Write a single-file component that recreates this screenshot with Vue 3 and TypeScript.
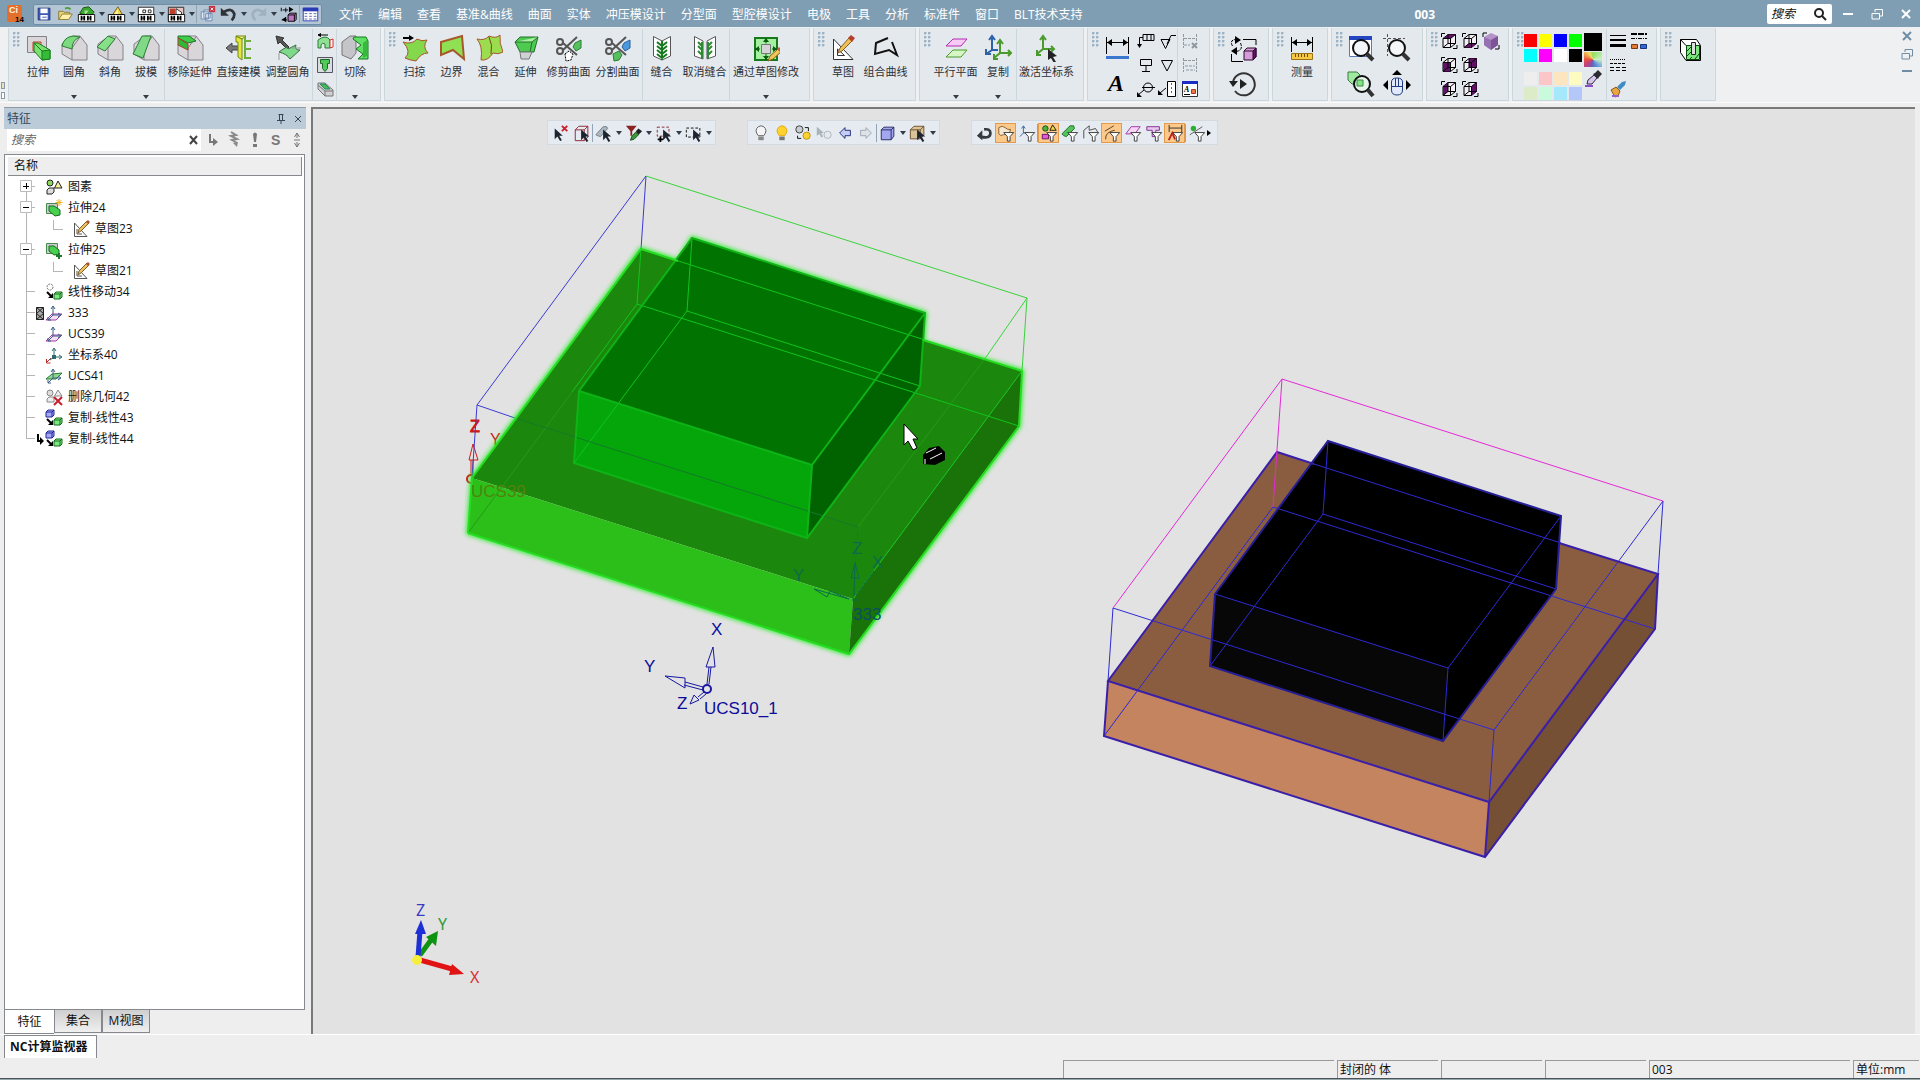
<script setup lang="ts">
import { ref } from 'vue'

interface Tool { icon: string; label: string; menu?: boolean }
interface Section { tools: Tool[]; roomy?: boolean; stack?: string[] }
interface Row { icon: string; label: string; open?: boolean; closed?: boolean; child?: boolean; badge?: string; last?: boolean; first?: boolean }
interface QuickTool { icon: string; label: string; caret?: boolean; on?: boolean; sep?: boolean }

const funnel = '<path fill="#fff" stroke="#333" d="M7.500 9.500h11l-4 4.500v5h-3v-5z"/>'
const pointer = '<path fill="#1c2430" d="M9 6v12l3-3 3 5 2-1-3-5h4z"/>'
const nodes = '<path fill="#fff" stroke="#000" d="M1.500 10.500h18v8h-18z"/><path stroke="#000" stroke-width="2" d="M5 12v5M8 12v5M12 12v5M15 12v5"/><path stroke="#000" d="M5 14.500h3M12 14.500h3"/>'
const grayCube = '<path fill="#d9d6da" stroke="#858087" d="M2 10 13 2h7l7 9v15H12L2 20z"/><path fill="none" stroke="#858087" d="M12 26V14l8-11"/>'
const cubeFrame = '<path fill="none" stroke="#000" d="M1.500 5V1.500H5M17 13v3.500h-4"/><path fill="#f3eef5" stroke="#000" d="M3 6.500 8 2.500h7.500v9l-5 4H3z"/>'
const cubeEdges = '<path fill="none" stroke="#000" d="M3 6.500h7.500v9M10.500 6.500l5-4M8 2.500v9h7.500M8 11.500l-5 4"/>'
const viewCube = (face: string): string => cubeFrame + `<path fill="#631069" d="${face}"/>` + cubeEdges
const smallBox = (x: number, y: number, fill: string, line: string): string =>
  `<path fill="${fill}" stroke="${line}" d="M${x} ${y + 2}l2-2h6v5l-2 2h-6zM${x} ${y + 2}h6v5M${x + 6} ${y + 2}l2-2"/>`
const axes = '<path fill="none" stroke="#3a5f86" d="M8 3v8l-5 5M8 11h7M6 5l2-3 2 3M13 9l3 2-3 2M3 13v3h3"/>'
const pencil = '<path fill="none" stroke="#555" d="M2.500 3v13.500H15L2.500 3zM5 9v5h5"/><path fill="#f0c060" stroke="#80602a" d="M6 13l1-4 8-8 2 2-8 8z"/><path fill="#b05038" d="M14 2l2-2 2 2-2 2z"/>'
const magnifier = '<circle cx="14" cy="14" r="8" fill="#f4f6f8" stroke="#111" stroke-width="2"/><path stroke="#333" stroke-width="4" d="M20 20l6 6"/>'

const art: Record<string, string> = {
  save: '<path fill="#3f57b5" stroke="#24347c" d="M3.500 3.500h13v13h-13z"/><path fill="#fff" d="M6 4h8v5H6zM6 11h8v5H6z"/><path stroke="#3f57b5" d="M8 13.500h5"/>',
  open: '<path fill="#e8d27a" stroke="#8a7830" d="M3 16V7h5l1 1h6v3"/><path fill="#fff2a8" stroke="#8a7830" d="M3 16l4-6h11l-4 6z"/><path fill="none" stroke="#4a9a3a" stroke-width="2" d="M10 4q4-2 6 1"/>',
  qGreen: '<path fill="#39a82e" stroke="#174d12" d="M3 9l4-6 6-1 6 6-3 3H8z"/><path fill="#a8e090" d="M8 6h5l-4 5z"/>' + nodes,
  qYellow: '<path fill="#f3d54e" stroke="#6e5c10" d="M4 14 12 2l7 12z"/><path fill="#fff3b0" d="M6 13l6-8v8z"/>' + nodes,
  qBox: '<path fill="#fff" stroke="#222" d="M1.500 2.500h17v12h-17zM6.500 5.500h3v3h-3zM12.500 5.500h3v3h-3z"/>' + nodes,
  qRed: '<path fill="#e9c8c0" stroke="#222" d="M1.500 2.500h17v14h-17z"/><path fill="#c04030" d="M3 4h6v7H3z"/><path fill="#fff" stroke="#222" d="M10 4l6 4v8l-6-5z"/>' + nodes,
  copyX: '<path fill="#dfe7f2" stroke="#6a87ad" d="M3.500 7.500h8v8h-8zM6.500 5.500h7v9h-7zM8.500 9.500h7v8h-7z"/><path fill="#c63040" d="M12 1h7v7h-7z"/><path stroke="#fff" d="M14 3l3 3M17 3l-3 3"/>',
  undo: '<path fill="none" stroke="#2e3338" stroke-width="3" d="M5 8q9-6 12 2 0 4-3 7"/><path fill="#2e3338" d="M2 3v9h9z"/>',
  redo: '<path fill="none" stroke="#9fb0be" stroke-width="3" d="M16 8Q7 2 4 10q0 4 3 7"/><path fill="#9fb0be" d="M19 3v9h-9z"/>',
  swap: '<path fill="none" stroke="#000" d="M4 5.500h6M7.500 3v5M3 16.500h6M2.500 3v4"/><path fill="#000" d="M11 2l5 3-5 3zM8 13v6l-5-3z"/><path fill="#b877c0" stroke="#000" d="M10 11l2-2h7v7l-2 2h-7zM10 11h7v7M17 11l2-2"/>',
  table: '<path fill="#fff" stroke="#2a3bb5" d="M2.500 3.500h16v14h-16z"/><path fill="#2a3bb5" d="M2 3h17v4H2z"/><path stroke="#4b62a8" stroke-dasharray="3 2" d="M4 9.500h13M4 12.500h13M4 15.500h13"/>',

  extrude: '<path fill="#d9d6da" stroke="#858087" d="M3.500 2.500h19v16h-19z"/><path fill="#efb8a0" stroke="#c23c26" d="M9 8h8v9H9z"/><path fill="#79e070" stroke="#1b7a1b" d="M10 9h4l12 7v9l-8 1-8-9z"/><path fill="#35bb3a" stroke="#1b7a1b" d="M18 17l8-1v9l-8 1z"/><path fill="none" stroke="#1b7a1b" d="M10 9l8 8"/>',
  fillet: grayCube + '<path fill="#7bd97e" stroke="#2c7d35" d="M2 12Q4 3 13 2l7 1q-8 3-8 12z"/>',
  chamfer: grayCube + '<path fill="#86e088" stroke="#2c7d35" d="M1 13 12 2l7 3L9 17z"/>',
  draft: grayCube + '<path fill="#7fd987" stroke="#2c7d35" d="M10 2h9l-8 22-10-4z"/>',
  removeExtend: grayCube + '<path fill="#3fcc48" stroke="#1d7426" d="M2 2h11l7 5-8 2-10-5z"/><path fill="#2eb838" stroke="#b03a28" d="M2 4l10 6v6L2 11z"/>',
  direct: '<path fill="#777" stroke="#444" d="M1 14l6-5v3h7v4H7v3z"/><path fill="#e4e83a" stroke="#6f8a12" d="M11 2l6 3v21l-4-3V8h-2z"/><path fill="#f4f070" stroke="#6f8a12" d="M11 2h10l-4 3z"/><path fill="none" stroke="#6fae3a" stroke-width="2" d="M20 3v22M20 7h6M20 15h6M20 24h6"/>',
  adjust: '<path fill="#555" stroke="#333" d="M2 2l8 2-2 2 7 7-2 2-7-7-2 2z"/><path fill="#7fd98a" stroke="#3a6a44" d="M5 18q9-7 9-3l8-4q-2 5 4 5l-10 9q-3-5-11-7z"/><path fill="none" stroke="#999" d="M17 14h10M5 19v7"/>',
  shell: '<path fill="#8ee094" stroke="#2b7d35" d="M2 8q8-6 12 0v8H9v-4q-3-2-4 1v3H2z"/><path fill="#fff" stroke="#c33" d="M14 8l3-1v8l-3 1z"/><path stroke="#000" d="M3 3h9M5 1.500 2 3l3 1.500"/>',
  boss: '<path fill="#d9dde0" stroke="#556" d="M1.500 1.500h15v15h-15z"/><path fill="#4fc95a" stroke="#1b6b27" d="M4.500 3.500h9v4h-2v5l-2.500 3-2.500-3v-5h-2z"/>',
  pocket: '<path fill="#d0d0d2" stroke="#777" d="M2 3h7l8 7v6H9L2 9z"/><path fill="#49bd52" stroke="#286" d="M4 4h5l5 5H9z"/><path fill="none" stroke="#777" d="M2 5l7 6v5M9 11h8"/>',
  cut: '<path fill="#c5c5c9" stroke="#777" d="M1 8l8-6h6v17l-5 6-9-4z"/><path fill="#5fe065" stroke="#19781f" d="M13 3h12l2 4v18H17l5-5-7-5 5-4-8-6z"/><path fill="#38b93e" d="M22 9l4-3v16l-4 2z"/>',
  sweep: '<path fill="#83d84c" stroke="#a8562c" d="M2 8q9 3 14-3 5 3 10 1-5 7 1 13-7 0-12 8-7-1-11-3 7-6-2-16z"/><path stroke="#000" stroke-width="2" d="M2 4h7"/><path fill="#000" d="M8 1l5 3-5 3z"/>',
  boundary: '<path fill="#8fe052" stroke="#a8562c" stroke-width="2" d="M3 8l21-6 2 23-11-9-12 5z"/>',
  blend: '<path fill="#9bdd4e" stroke="#a8562c" d="M2 5q8 2 12-3 7 3 11-1-1 8 3 17-5 3-10 1-5 8-12 7 2-14-4-21z"/><path fill="none" stroke="#6c4a1c" d="M14 3q4 8 2 17"/>',
  extend: '<path fill="#4fca50" stroke="#23702a" d="M3 8l5-5h18l-4 15H8z"/><path fill="#a9f0a0" stroke="#23702a" d="M3 8h17l6-5M20 8l-2 10"/><path fill="#cfd2d4" stroke="#777" d="M8 18h12l-3 7H9z"/>',
  trim: '<g fill="none" stroke="#555" stroke-width="2"><circle cx="5" cy="8" r="3"/><circle cx="5" cy="17" r="3"/><path d="M8 9l14 12M8 16 22 3"/></g><path fill="#56c15c" stroke="#2b7d35" d="M20 9l6-3v8l-5 3-3-4z"/><path fill="#fff" stroke="#000" stroke-dasharray="2 1" d="M10 20l4-3 4 3-2 6-5 1z"/>',
  split: '<g fill="none" stroke="#555" stroke-width="2"><circle cx="5" cy="8" r="3"/><circle cx="5" cy="17" r="3"/><path d="M8 9l14 12M8 16 22 3"/></g><path fill="#4c98dd" stroke="#2a5f9a" d="M20 9l6-3v8l-5 3-3-4z"/><path fill="#56c15c" stroke="#2b7d35" d="M9 20l6-3 3 4-3 5-5 1z"/>',
  sew: '<path fill="#fff" stroke="#555" d="M5.500 2.500 14 7l8.500-4.500V22L14 26l-8.500-4z"/><path fill="none" stroke="#157a1c" stroke-width="2" d="M14 7v19M9 8l5 4 5-4M9 12l5 4 5-4M9 16l5 4 5-4M9 20l5 4 5-4"/>',
  unsew: '<path fill="#fff" stroke="#555" d="M3.500 2.500 12 7v18l-8.500-3zM24.500 2.500 16 7v18l8.500-3z"/><path fill="none" stroke="#2c8a33" stroke-width="2" d="M11 8v16M17 8v16M7 8l4 4M7 12l4 4M7 17l4 4M21 8l-4 4M21 12l-4 4M21 17l-4 4"/>',
  bySketch: '<path fill="#a4efa0" stroke="#167a1a" stroke-width="2" d="M3 4h22v22H3z"/><path fill="#d5d5d8" stroke="#777" d="M9.500 10.500h9v9h-9z"/><path stroke="#0a5a10" d="M14 4.500v5M14 20v6M3 15h5M20 15h5"/><path fill="#0a5a10" d="M11 8h6l-3-4zM11 22h6l-3 4zM7 12v6l-4-3zM21 12v6l4-3z"/><path fill="#f3c558" stroke="#856020" d="M16 27l2-5 8-7 3 3-8 7z"/><path fill="#c65a40" d="M25 15l2-2 3 3-2 2z"/>',
  sketch: '<path fill="#fff" stroke="#333" d="M4.500 5v20.500H24zM8.500 15v6.500h7z"/><path fill="#f0bf58" stroke="#85602a" d="M9 19l2-5 9-10 3 3-10 10z"/><path fill="#b5402c" d="M19 4l3-3 4 3-3 4z"/>',
  composite: '<path fill="none" stroke="#111" stroke-width="2" d="M16 4 4 9l-1 11 14-4 8 5-5-13"/>',
  planes: '<path fill="#f7c9f5" stroke="#b32cb0" d="M4 12l7-7h14l-6 7z"/><path fill="#d5f7c5" stroke="#4f9a2a" d="M4 23l7-7h14l-6 7z"/>',
  copyUcs: '<g fill="none" stroke="#2b62a8" stroke-width="2"><path d="M8 4v12l-6 4M8 16h6M5 6l3-4 3 4M2 15v5h5"/></g><g fill="none" stroke="#4b9a2c" stroke-width="2"><path d="M16 8v11l-6 5M16 19h10M13 10l3-4 3 4M24 16l3 3-3 3M10 20v5h4"/></g>',
  activate: '<g fill="none" stroke="#4b9a2c" stroke-width="2"><path d="M10 4v11l-6 5M10 15h10M7 6l3-4 3 4M18 12l3 3-3 3M4 16v5h4"/></g><path fill="#222" d="M15 15v11l3-2 3 5 2-1-3-5 4-1z"/>',
  dimension: '<path fill="none" stroke="#000" stroke-width="1" d="M3.500 3v17M25.500 3v17M4 8.500h21"/><path fill="#000" d="M4 8.500 9 5v7zM25 8.500 20 5v7z"/><path fill="#3a78cf" d="M3 22h23v3H3z"/>',
  textTool: '<text x="5" y="21" font-family="Liberation Serif" font-size="24" font-style="italic" font-weight="bold" fill="#000">A</text>',
  note: '<path fill="none" stroke="#000" d="M6 2.500h11v6H6zM10 3v5M14 3v5M6 5.500H2.500V15"/><path fill="#000" d="M0 12h5l-2.500 4z"/>',
  rough: '<path fill="none" stroke="#000" d="M3 7.500h9l-4.500 9zM9 12l4-8.500h5"/>',
  datum: '<path fill="none" stroke="#000" d="M3.500 3.500h11v6h-11zM9 10v6M5 15.500h8"/>',
  triangle: '<path fill="none" stroke="#000" d="M3.500 4.500h11L9 15z"/>',
  balloon: '<circle cx="11" cy="7.500" r="4.500" fill="none" stroke="#000"/><path fill="none" stroke="#000" d="M5 7.500h13M7 10l-6 5"/><path fill="#000" d="M0 12v5h5z"/>',
  listNote: '<path fill="#fff" stroke="#000" d="M9.500 1.500h8v15h-8z"/><path stroke="#000" d="M8 8l-6 5"/><path fill="#000" d="M0 10v5h5z"/><path stroke="#c33" stroke-dasharray="2 2" d="M13.500 3v12"/>',
  dimDel: '<path fill="none" stroke="#8f979f" stroke-dasharray="3 1" d="M2.500 2v14M15.500 2v8M3 6.500h12M3 13h6"/><path stroke="#8f979f" stroke-width="2" d="M11 11l5 5M16 11l-5 5"/>',
  dimSwap: '<path fill="none" stroke="#8f979f" stroke-dasharray="3 1" d="M2.500 2v14M15.500 2v14M3 4.500h12M4 10h10M5 14h9"/>',
  style: '<path fill="#fff" stroke="#333" d="M1.500 2.500h15v14h-15z"/><path fill="#1a2cc4" d="M1 1h16v3H1z"/><text x="3" y="12" font-family="Liberation Serif" font-size="8" font-style="italic" font-weight="bold">A</text><path stroke="#000" d="M3 14.500h6"/><path fill="#e77b3c" stroke="#a33" d="M10.500 9.500h4v4h-4z"/>',
  replace: '<path fill="none" stroke="#000" d="M14 5.500h13V11M2.500 20v7.500H14"/><path fill="none" stroke="#000" stroke-dasharray="3 1" d="M3.500 12Q0 6 7 5.500M11.500 9q3 7-4 8.500"/><path fill="#000" d="M6 2l6 4-6 4zM8 13l-6 4 6 4z"/><path fill="#d59ad8" stroke="#2a0a2c" d="M15 17l3-3h9v9l-3 3h-9z"/><path fill="#631069" stroke="#2a0a2c" d="M24 17l3-3v9l-3 3z"/><path stroke="#2a0a2c" d="M15 17h9"/>',
  history: '<path fill="none" stroke="#333" stroke-width="2" d="M4 12a11 11 0 1 1 2 9"/><path fill="#222" d="M0 11h9l-5 6zM11 9l7 5-7 5z"/>',
  measure: '<path fill="none" stroke="#000" d="M3.500 3v15M24.500 3v15M4 8.500h20"/><path fill="#000" d="M4 8.500 9 5v7zM24 8.500 19 5v7z"/><path fill="#f6c844" stroke="#9a7414" d="M3.500 19.500h21v6h-21z"/><path stroke="#6a4f08" d="M7.500 20v3M10.500 20v3M13.500 20v3M16.500 20v3M19.500 20v3"/>',
  zoomFit: '<path fill="#fff" stroke="#5a7ab5" d="M2.500 3.500h22v19h-22z"/><path fill="#2446c0" d="M2 2h23v4H2z"/>' + magnifier,
  zoomWin: '<path fill="none" stroke="#555" stroke-dasharray="3 2" d="M4.500 0v22M0 4.500h22"/>' + magnifier,
  zoomObj: '<path fill="#9fe8a0" stroke="#3a7a40" d="M1 2h9l3 3v9H5L1 10z"/><circle cx="15" cy="14" r="8" fill="#e9f5ea" stroke="#111" stroke-width="2"/><path fill="#86e488" stroke="#3a8a40" d="M10 10h6v6h-6z"/><path stroke="#333" stroke-width="4" d="M21 20l5 6"/>',
  mouse: '<path fill="#000" d="M14 0l5 5H9zM0 15l5-5v10zM28 15l-5-5v10z"/><path fill="#dfe9fb" stroke="#203a80" d="M8.500 12q0-4 5.500-4t5.500 4v8q0 5-5.500 5t-5.500-5z"/><path stroke="#203a80" d="M8.500 16.500h11M12.500 8v8M15.500 8v8"/>',
  vTop: viewCube('M3 6.500 8 2.500h7.500l-5 4z'),
  vBottom: viewCube('M3 15.500l5-4h7.500l-5 4z'),
  vIso: '<path fill="none" stroke="#000" d="M1 5V1h4M17 13v4h-4"/><path fill="#b493c8" d="M2 5l7-4 7 3v9l-7 5-7-5z"/><path fill="#7d5498" d="M9 8l7-4v9l-7 5z"/><path fill="#9671b2" d="M2 5l7 3v10l-7-5z"/>',
  vFront: viewCube('M3 6.500h7.500v9H3z'),
  vBack: viewCube('M8 2.500h7.500v9H8z'),
  vLeft: viewCube('M3 6.500l5-4v9l-5 4z'),
  vRight: viewCube('M10.500 6.500l5-4v9l-5 4z'),
  weights: '<path fill="#000" d="M1 3h16v1H1zM1 7h16v2H1zM1 12h16v3H1z"/>',
  dashes: '<path stroke="#000" d="M1 3.500h16" stroke-dasharray="1 1"/><path stroke="#000" stroke-dasharray="3 1" d="M1 7.500h16"/><path stroke="#000" stroke-dasharray="4 2" d="M1 11.500h16M1 14.500h16"/>',
  lineStyle: '<path stroke="#000" stroke-width="2" stroke-dasharray="6 1" d="M1 2h16"/><path stroke="#000" stroke-dasharray="4 1 1 1" d="M1 6.500h16"/><path fill="#e07a36" stroke="#7a3a14" d="M1.500 12.500h6v4h-6z"/><path fill="#3565d8" stroke="#18357a" d="M10.500 12.500h6v4h-6z"/>',
  brush: '<path fill="#3f8bc4" d="M13 2l4-1-1 4-5 5-3-3z"/><path fill="#e9a640" stroke="#8a5a18" d="M2 10l5-3 4 4-2 5-3 1z"/><path fill="#9a60c8" d="M3 15h7v2H3z"/>',
  dropper: '<path fill="#d5c8e6" stroke="#33204a" d="M3 14l1-4 6-5 3 3-5 6z"/><path fill="#2b2b33" d="M9 4l2-1 3-3 4 4-3 3-1 2z"/><path fill="#8a4cc8" d="M1 15h8v2H1z"/>',
  section: '<path fill="#fff" stroke="#000" d="M4.500 5.500h16l4 6v15H10l-5.500-8z"/><path fill="none" stroke="#000" d="M4.500 5.500 10 11.500h14"/><path fill="#7fe67f" stroke="#0a4a10" d="M10.500 11.500h13v14h-13z"/><path stroke="#0a4a10" d="M11 17l5-5M11 22l4-4M19 25l4-5M14 25l2-2"/><path fill="#ddd" stroke="#222" d="M15.500 8.500h4v12h-4z"/>',

  pickX: '<path fill="#1c2430" d="M3 5v12l3-3 3 5 2-1-3-5h4z"/><path stroke="#c81e2c" stroke-width="2" d="M11 2l6 6M17 2l-6 6"/>',
  pickBox: '<path fill="none" stroke="#8a1c2a" d="M2.500 6.500h10v12h-10zM2.500 6.500l4-4h10v12l-4 4M12.500 6.500l4-4"/>' + pointer,
  pickGray: '<path fill="#aeb8c0" stroke="#6d7880" d="M1 12l8-9h4l1 2-8 9-3-1z"/>' + pointer,
  filterPen: '<path fill="#8a2424" d="M1 2h12L8 8v5H6V8z"/><path fill="#3a9a3a" stroke="#114a14" d="M6 18l2-5 4-4 3 3-5 5z"/><path fill="#222" d="M12 8l3-3 4 3-4 4z"/>',
  boxPlus: '<path fill="none" stroke="#8a1c2a" stroke-dasharray="3 2" d="M2.500 3.500h13v10h-13z"/>' + pointer + '<path stroke="#000" stroke-width="2" d="M6 14v6M3 17h6"/>',
  boxPick: '<path fill="none" stroke="#000" stroke-dasharray="3 2" d="M1.500 4.500h15v10h-15z"/>' + pointer,
  bulbOff: '<path fill="#f5f5f5" stroke="#555" d="M7 13Q2 7 7 3q3-2 6 0 5 4 0 10z"/><path fill="#888" d="M7 14h6v4H7z"/>',
  bulbOn: '<path fill="#ffd22e" stroke="#e0a310" d="M7 13Q2 7 7 3q3-2 6 0 5 4 0 10z"/><path fill="#777" d="M7 14h6v4H7z"/>',
  bulbSwap: '<circle cx="6" cy="6" r="4" fill="#c9ccd0" stroke="#333"/><circle cx="14" cy="13" r="4" fill="#ffd22e" stroke="#b88a10"/><path fill="none" stroke="#000" d="M12 4h4v4M8 16H4v-3"/>',
  bulbPick: '<path fill="#aab2ba" d="M2 3v10l3-2 2 4 2-1-2-4h3z"/><circle cx="14" cy="12" r="4" fill="#e6eaee" stroke="#aab2ba"/>',
  arrowL: '<path fill="#c4cef4" stroke="#1a2370" stroke-width="1" d="M4 10l6-6v3h6v6h-6v3z"/>',
  arrowR: '<path fill="#dde2e8" stroke="#9aa4ae" d="M16 10l-6-6v3H4v6h6v3z"/>',
  cubeBlue: '<path fill="#a2a7f0" stroke="#20245a" d="M2.500 6.500l3-3h11v10l-3 4h-11zM2.500 6.500h11v11M13.500 6.500l3-3"/>',
  cubeTan: '<path fill="#d9c49a" stroke="#6a4a2a" d="M1.500 6.500l4-4h11v10l-4 4h-11zM1.500 6.500h11v10M12.500 6.500l4-4"/>' + pointer,
  back: '<path fill="none" stroke="#333a40" stroke-width="3" d="M5 14q11 3 11-4 0-5-7-4"/><path fill="#333a40" d="M1 13l6-6v11z"/>',
  fFace: '<path fill="#f7e6cf" stroke="#7a5a30" d="M2 4q4-3 7 0t6 2l-2 7q-3-3-6-1t-5-1z"/>' + funnel,
  fAxes: '<path fill="none" stroke="#335f9a" d="M6 3v7l-4 4M6 10h6M4 5l2-3 2 3"/>' + funnel,
  fShapes: '<circle cx="6" cy="5" r="3" fill="#4ab53c" stroke="#124a10"/><path fill="#f5d83c" stroke="#111" d="M14 1l4 6h-7z"/><path fill="#e25ad8" stroke="#5a1060" d="M2.500 11.500h7v5h-7z"/>' + funnel,
  fGreen: '<path fill="#54c45a" stroke="#1a6a22" d="M1 11l9-9h4l1 3-9 9-3-1z"/>' + funnel,
  fCurve: '<path fill="none" stroke="#444" d="M2 16V7l6-5v5l7-2 3 5"/>' + funnel,
  fArc: '<path fill="none" stroke="#4a3a20" d="M2 8 12 2M3 17Q2 9 13 7"/>' + funnel,
  fPlane: '<path fill="#f5d5f4" stroke="#a02ca0" d="M2 11l6-8h10l-6 8z"/>' + funnel,
  fSolid: '<path fill="#e8c6ee" stroke="#7a2a8a" d="M2 3h14v4h-4v7H8V7H2z"/>' + funnel,
  fDim: '<path fill="none" stroke="#222" d="M3.500 1v8M17.500 1v8M4 4.500h13"/><path fill="none" stroke="#c02020" stroke-width="2" d="M3 18l4-8 3 7"/>' + funnel,
  fPoint: '<circle cx="6" cy="5" r="3" fill="#2fae35"/><path stroke="#555" d="M2 12l14-9"/>' + funnel,

  tShapes: '<circle cx="5" cy="5" r="3" fill="#8bd85c" stroke="#222"/><path fill="#f6ef9a" stroke="#222" d="M13 3l4 7H9.500z"/><path fill="#ddd" stroke="#222" d="M2 12l2-2h5v4l-2 2H2z"/>',
  tNew: '<path fill="#c9cccf" stroke="#4a8a50" d="M1.500 4.500h11v10h-11z"/><path fill="#48d14f" stroke="#176b1c" d="M4 7h5l6 4v5l-5 1-6-5z"/><path stroke="#f0b428" d="M14 0v7M10.500 3.500h7M11.500 1l5 5M16.500 1l-5 5"/>',
  tAdd: '<path fill="#c9cccf" stroke="#4a8a50" d="M1.500 2.500h11v10h-11z"/><path fill="#48d14f" stroke="#176b1c" d="M4 5h5l5 4v4l-5 1-5-4z"/><path stroke="#1c7a2a" stroke-width="2" d="M14 12v6M11 15h6"/>',
  tSketch: pencil,
  tMove: '<circle cx="5" cy="4" r="3" fill="#fff" stroke="#777" stroke-dasharray="2 1"/><path stroke="#000" stroke-width="2" d="M2 9l4 4"/><path fill="#000" d="M8 10v5H3z"/>' + smallBox(9, 9, '#7be880', '#176b1c'),
  tPlane: '<path fill="#f7dff5" stroke="#a838a8" d="M1 16l6-6h10l-6 6z"/>' + axes,
  tAxes: '<path fill="none" stroke="#2c6a70" stroke-width="1" d="M9 3v8l-4 3M9 11h7M7 5l2-3 2 3M14 9l3 2-3 2"/><path fill="#2c6a70" d="M7 9h4v4H7z"/><path fill="none" stroke="#c02a2a" d="M6 12l-4 4M1.500 13v4h4"/>',
  tGreen: '<path fill="#8bd88a" stroke="#2b7d35" d="M1 12l6-5 10-1-6 6z"/>' + axes,
  tDelete: '<circle cx="5" cy="5" r="3" fill="#ddd" stroke="#888"/><path fill="#eee" stroke="#888" d="M13 2l4 6H9.500zM2 11l2-2h5v5H2z"/><path stroke="#c81e2c" stroke-width="2" d="M9 9l8 8M17 9l-8 8"/>',
  tCopy: smallBox(1, 1, '#a5a8f5', '#20249a') + '<path stroke="#000" stroke-width="2" d="M2 10l4 4"/><path fill="#000" d="M8 11v5H3z"/>' + smallBox(9, 9, '#7be880', '#176b1c'),
  bHour: '<path fill="#aaa" stroke="#222" d="M.500 3.500h7v12h-7zM.500 3.500l7 6M7.500 3.500l-7 6M.500 9.500l7 6M7.500 9.500l-7 6"/>',
  bArrow: '<path fill="none" stroke="#000" stroke-width="2" d="M2 4v7h3"/><path fill="#000" d="M4 7l4 4-4 4z"/>',
  sTurn: '<path fill="none" stroke="#777" stroke-width="2" d="M6 3v8h5"/><path fill="#777" d="M9 7l5 4-5 4z"/>',
  sZig: '<path fill="none" stroke="#8a8a8a" stroke-width="2" d="M6 1l5 3-5 1 6 3-5 1 5 3"/><path fill="#8a8a8a" d="M8 12l5-1-1 5z"/>',
  sBang: '<path fill="#777" d="M7 3q2-3 4 0l-1 8H8zM7 13h4v3H7z"/>',
  sLetter: '<text x="4" y="14" font-family="Liberation Sans" font-weight="bold" font-size="14" fill="#777">S</text>',
  sSplit: '<path fill="none" stroke="#777" d="M9 7V2M6.500 6 9 2l2.500 4M9 11v5M6.500 12 9 16l2.500-4M6 9h6"/>',
}

const quick: QuickTool[] = [
  { icon: 'save', label: '保存' }, { icon: 'open', label: '打开' },
  { icon: 'qGreen', label: '曲面', caret: true }, { icon: 'qYellow', label: '实体', caret: true },
  { icon: 'qBox', label: '草图', caret: true }, { icon: 'qRed', label: '装配', caret: true, sep: true },
  { icon: 'copyX', label: '关闭' }, { icon: 'undo', label: '撤销', caret: true },
  { icon: 'redo', label: '重做', caret: true }, { icon: 'swap', label: '切换', sep: true }, { icon: 'table', label: '列表' },
]
const menus = ['文件', '编辑', '查看', '基准&曲线', '曲面', '实体', '冲压模设计', '分型面', '型腔模设计', '电极', '工具', '分析', '标准件', '窗口', 'BLT技术支持']

const groups: Section[][] = [
  [
    { tools: [{ icon: 'extrude', label: '拉伸' }, { icon: 'fillet', label: '圆角', menu: true }, { icon: 'chamfer', label: '斜角' }, { icon: 'draft', label: '拔模', menu: true }] },
    { tools: [{ icon: 'removeExtend', label: '移除延伸' }, { icon: 'direct', label: '直接建模' }, { icon: 'adjust', label: '调整圆角' }] },
    { tools: [], stack: ['shell', 'boss', 'pocket'] },
    { tools: [{ icon: 'cut', label: '切除', menu: true }] },
  ],
  [
    { roomy: true, tools: [{ icon: 'sweep', label: '扫掠' }, { icon: 'boundary', label: '边界' }, { icon: 'blend', label: '混合' }, { icon: 'extend', label: '延伸' }, { icon: 'trim', label: '修剪曲面' }, { icon: 'split', label: '分割曲面' }] },
    { roomy: true, tools: [{ icon: 'sew', label: '缝合' }, { icon: 'unsew', label: '取消缝合' }] },
    { tools: [{ icon: 'bySketch', label: '通过草图修改', menu: true }] },
  ],
  [{ tools: [{ icon: 'sketch', label: '草图' }, { icon: 'composite', label: '组合曲线' }] }],
  [
    { tools: [{ icon: 'planes', label: '平行平面', menu: true }, { icon: 'copyUcs', label: '复制', menu: true }] },
    { tools: [{ icon: 'activate', label: '激活坐标系' }] },
  ],
]

const rows: Row[] = [
  { icon: 'tShapes', label: '图素', closed: true, first: true },
  { icon: 'tNew', label: '拉伸24', open: true },
  { icon: 'tSketch', label: '草图23', child: true },
  { icon: 'tAdd', label: '拉伸25', open: true },
  { icon: 'tSketch', label: '草图21', child: true },
  { icon: 'tMove', label: '线性移动34' },
  { icon: 'tPlane', label: '333', badge: 'bHour' },
  { icon: 'tPlane', label: 'UCS39' },
  { icon: 'tAxes', label: '坐标系40' },
  { icon: 'tGreen', label: 'UCS41' },
  { icon: 'tDelete', label: '删除几何42' },
  { icon: 'tCopy', label: '复制-线性43' },
  { icon: 'tCopy', label: '复制-线性44', badge: 'bArrow', last: true },
]

const floats: QuickTool[][] = [
  [
    { icon: 'pickX', label: '取消选择' }, { icon: 'pickBox', label: '选择体', sep: true }, { icon: 'pickGray', label: '选择面', caret: true },
    { icon: 'filterPen', label: '过滤', caret: true }, { icon: 'boxPlus', label: '窗选', caret: true }, { icon: 'boxPick', label: '框选', caret: true },
  ],
  [
    { icon: 'bulbOff', label: '隐藏' }, { icon: 'bulbOn', label: '显示' }, { icon: 'bulbSwap', label: '切换显示' }, { icon: 'bulbPick', label: '选择显示' },
    { icon: 'arrowL', label: '后退' }, { icon: 'arrowR', label: '前进', sep: true }, { icon: 'cubeBlue', label: '着色', caret: true }, { icon: 'cubeTan', label: '材质', caret: true },
  ],
  [
    { icon: 'back', label: '返回' }, { icon: 'fFace', label: '面', on: true }, { icon: 'fAxes', label: '坐标系', sep: true }, { icon: 'fShapes', label: '全部', on: true },
    { icon: 'fGreen', label: '曲面' }, { icon: 'fCurve', label: '线框' }, { icon: 'fArc', label: '曲线', on: true }, { icon: 'fPlane', label: '平面' },
    { icon: 'fSolid', label: '实体' }, { icon: 'fDim', label: '标注', on: true, sep: true }, { icon: 'fPoint', label: '点' },
  ],
]

const vivid = ['#ff0000', '#ffff00', '#0000ff', '#00ff00', '#00ffff', '#ff00ff', '#ffffff', '#000000']
const pale = ['#eeeeee', '#fcc6c9', '#fde5c0', '#fdfbc0', '#dcebc8', '#c8fbdc', '#a5e8fb', '#b3c8f8']
const viewCols = [['vTop', 'vFront', 'vLeft'], ['vBottom', 'vBack', 'vRight'], ['vIso']]
const statusCells = ['', '封闭的 体', '', '', '003', '单位:mm']
const tabs = ['特征', '集合', 'M视图']
const activeTab = ref('特征')
const featureQuery = ref('')
const commandQuery = ref('')
</script>

<template>
  <div class="app">
    <header class="titlebar">
      <svg class="logo" viewBox="0 0 18 20" aria-hidden="true">
        <rect width="15" height="17" y="1" rx="2" fill="#e2702c" />
        <text x="2" y="9" font-family="Liberation Sans" font-size="9" font-weight="bold" fill="#fff3e0">Ci</text>
        <text x="8" y="18" font-family="Liberation Sans" font-size="8" font-weight="bold" fill="#000">14</text>
      </svg>
      <div class="quick">
        <template v-for="q in quick" :key="q.icon">
          <button class="qbtn" :aria-label="q.label"><svg viewBox="0 0 21 21" v-html="art[q.icon]" /></button>
          <button v-if="q.caret" class="qcaret" :aria-label="q.label + '选项'"><i class="caret" /></button>
          <span v-if="q.sep" class="vsep" />
        </template>
      </div>
      <nav class="menu"><button v-for="m in menus" :key="m">{{ m }}</button></nav>
      <h1 class="title">003</h1>
      <div class="command">
        <input v-model="commandQuery" type="text" placeholder="搜索" aria-label="搜索命令" />
        <svg viewBox="0 0 14 14"><circle cx="6" cy="6" r="4" fill="none" stroke="#222" stroke-width="2" /><path stroke="#222" stroke-width="2" d="M9 9l4 4" /></svg>
      </div>
      <div class="winctl">
        <button aria-label="最小化"><svg viewBox="0 0 12 12"><path stroke="#fff" stroke-width="2" d="M1 6h10" /></svg></button>
        <button aria-label="还原"><svg viewBox="0 0 12 12"><path fill="none" stroke="#fff" d="M4 4V1.500h7.500V8H9M1 5.500h7.500V11H1z" /></svg></button>
        <button aria-label="关闭"><svg viewBox="0 0 12 12"><path stroke="#fff" stroke-width="2" d="M2 2l8 8M10 2l-8 8" /></svg></button>
      </div>
    </header>

    <div class="ribbon">
      <div class="edge"><i /><i /></div>
      <section v-for="(group, gi) in groups" :key="gi" class="group" :class="{ tight: gi === 2 }">
        <span class="grip" />
        <div v-for="(s, si) in group" :key="si" class="section" :class="{ roomy: s.roomy }">
          <button v-for="t in s.tools" :key="t.label" class="tool" :class="'len' + t.label.length">
            <svg class="big" viewBox="0 0 28 28" v-html="art[t.icon]" />
            <span>{{ t.label }}</span>
            <i v-if="t.menu" class="caret" />
          </button>
          <div v-if="s.stack" class="col stack">
            <button v-for="k in s.stack" :key="k" class="small" :aria-label="k"><svg viewBox="0 0 18 18" v-html="art[k]" /></button>
          </div>
        </div>
      </section>

      <section class="group loose">
        <span class="grip" />
        <div class="section">
          <div class="bigcol">
            <button aria-label="尺寸标注"><svg class="big" viewBox="0 0 28 28" v-html="art.dimension" /></button>
            <button aria-label="文字"><svg class="big" viewBox="0 0 28 28" v-html="art.textTool" /></button>
          </div>
          <div class="col">
            <button v-for="k in ['note', 'datum', 'balloon']" :key="k" class="small" :aria-label="k"><svg viewBox="0 0 18 18" v-html="art[k]" /></button>
          </div>
          <div class="col">
            <button v-for="k in ['rough', 'triangle', 'listNote']" :key="k" class="small" :aria-label="k"><svg viewBox="0 0 18 18" v-html="art[k]" /></button>
          </div>
        </div>
        <div class="section">
          <div class="col stack">
            <button v-for="k in ['dimDel', 'dimSwap', 'style']" :key="k" class="small" :aria-label="k"><svg viewBox="0 0 18 18" v-html="art[k]" /></button>
          </div>
        </div>
      </section>

      <section class="group">
        <span class="grip" />
        <div class="section">
          <div class="bigcol">
            <button aria-label="替换"><svg class="big" viewBox="0 0 28 28" v-html="art.replace" /></button>
            <button aria-label="历史"><svg class="big" viewBox="0 0 28 28" v-html="art.history" /></button>
          </div>
        </div>
      </section>

      <section class="group">
        <span class="grip" />
        <div class="section">
          <button class="tool len2"><svg class="big" viewBox="0 0 28 28" v-html="art.measure" /><span>测量</span></button>
        </div>
      </section>

      <section class="group">
        <span class="grip" />
        <div class="section">
          <div class="bigcol">
            <button aria-label="全部缩放"><svg class="big" viewBox="0 0 28 28" v-html="art.zoomFit" /></button>
            <button aria-label="缩放到对象"><svg class="big" viewBox="0 0 28 28" v-html="art.zoomObj" /></button>
          </div>
          <div class="bigcol">
            <button aria-label="窗口缩放"><svg class="big" viewBox="0 0 28 28" v-html="art.zoomWin" /></button>
            <button aria-label="平移"><svg class="big" viewBox="0 0 28 28" v-html="art.mouse" /></button>
          </div>
        </div>
      </section>

      <section class="group">
        <span class="grip" />
        <div class="section">
          <div v-for="(c, ci) in viewCols" :key="ci" class="col">
            <button v-for="k in c" :key="k" class="small" :aria-label="k"><svg viewBox="0 0 18 18" v-html="art[k]" /></button>
          </div>
        </div>
      </section>

      <section class="group">
        <span class="grip" />
        <div class="section">
          <div class="palette">
            <div class="swatches"><button v-for="c in vivid" :key="c" :aria-label="c" :style="{ background: c }" /></div>
            <div class="swatches"><button v-for="c in pale" :key="c" :aria-label="c" :style="{ background: c }" /></div>
          </div>
          <div class="current">
            <button class="black" aria-label="当前颜色" />
            <button class="wheel" aria-label="更多颜色" />
            <button class="drop" aria-label="取色"><svg viewBox="0 0 18 18" v-html="art.dropper" /></button>
          </div>
        </div>
        <div class="section">
          <div class="col">
            <button v-for="k in ['weights', 'dashes', 'brush']" :key="k" class="small" :aria-label="k"><svg viewBox="0 0 18 18" v-html="art[k]" /></button>
          </div>
          <div class="col"><button class="small" aria-label="线型"><svg viewBox="0 0 18 18" v-html="art.lineStyle" /></button></div>
        </div>
      </section>

      <section class="group">
        <span class="grip" />
        <div class="section">
          <div class="bigcol"><button aria-label="剖切"><svg class="big" viewBox="0 0 28 28" v-html="art.section" /></button></div>
        </div>
      </section>

      <div class="docctl">
        <button aria-label="关闭文档"><svg viewBox="0 0 12 12"><path stroke="#6f8ea6" stroke-width="2" d="M2 2l8 8M10 2l-8 8" /></svg></button>
        <button aria-label="还原文档"><svg viewBox="0 0 12 12"><path fill="none" stroke="#6f8ea6" d="M4 4V1.500h7.500V8H9M1 5.500h7.500V11H1z" /></svg></button>
        <button aria-label="最小化文档"><svg viewBox="0 0 12 12"><path stroke="#6f8ea6" stroke-width="2" d="M1 5h10" /></svg></button>
      </div>
    </div>

    <main class="body">
      <aside class="dock">
        <div class="dockhead">
          <h2>特征</h2>
          <button aria-label="固定"><svg viewBox="0 0 12 12"><path fill="none" stroke="#34485c" d="M3.500 1.500h5M4.500 2v5M7.500 2v5M2 7.500h8M6 8v3" /></svg></button>
          <button aria-label="关闭面板"><svg viewBox="0 0 12 12"><path stroke="#34485c" d="M3 3l6 6M9 3l-6 6" /></svg></button>
        </div>
        <div class="find">
          <div class="box">
            <input v-model="featureQuery" type="text" placeholder="搜索" aria-label="搜索特征" />
            <button aria-label="清除"><svg viewBox="0 0 12 12"><path stroke="#444" stroke-width="2" d="M3 2l7 8M10 2l-7 8" /></svg></button>
          </div>
          <button v-for="k in ['sTurn', 'sZig', 'sBang', 'sLetter', 'sSplit']" :key="k" class="filter" :aria-label="k"><svg viewBox="0 0 18 18" v-html="art[k]" /></button>
        </div>
        <div class="tree">
          <div class="treehead">名称</div>
          <ul>
            <li v-for="r in rows" :key="r.label" :class="{ child: r.child, last: r.last, first: r.first }">
              <span class="guide" :class="{ stub: !r.child }">
                <button v-if="r.open || r.closed" class="expander" :aria-label="r.open ? '折叠' : '展开'">
                  <svg viewBox="0 0 12 12"><path fill="#fff" stroke="#bbb" d="M.500.500h11v11H.500z" /><path stroke="#000" :d="r.open ? 'M3 6.500h6' : 'M3 6.500h6M6.500 3v6'" /></svg>
                </button>
              </span>
              <span class="badge"><svg v-if="r.badge" viewBox="0 0 10 18" v-html="art[r.badge]" /></span>
              <svg class="ticon" viewBox="0 0 18 18" v-html="art[r.icon]" />
              <span class="name">{{ r.label }}</span>
            </li>
          </ul>
        </div>
        <div class="tabs">
          <button v-for="t in tabs" :key="t" :class="{ active: t === activeTab }" @click="activeTab = t">{{ t }}</button>
        </div>
      </aside>

      <div class="viewport">
        <svg class="scene" viewBox="313 109 1602 925" preserveAspectRatio="xMinYMin meet">
          <defs>
            <filter id="glow" x="-5%" y="-5%" width="110%" height="110%"><feGaussianBlur stdDeviation="2" /></filter>
          </defs>

          <g font-family="Liberation Sans" fill="none" stroke="#d01818">
            <path d="M473 474v-14M471 474v-14M469 460l4-16 5 16zM489 463l4-6 4 6M478 473l11-10" />
            <circle cx="471" cy="479" r="4" stroke-width="2" />
            <g fill="#d01818" font-size="16"><text x="470" y="432">Z</text><text x="490" y="445" stroke="none">Y</text></g>
          </g>

          <!-- highlighted part -->
          <g transform="translate(-636 -203)">
            <path fill="none" stroke="#3b3bd2" d="M1282 379 1113 608M1282 379l-5 73M1113 608l-5 73M1113 608l38 13" />
            <path fill="none" stroke="#3bd23b" d="M1282 379l381 122-5 73M1663 501l-43 62" />
            <path fill="none" stroke="#22ee22" stroke-width="4" stroke-linejoin="round" filter="url(#glow)" d="M1277 452l37 12 14-23 233 75-2 29 99 29-3 55-170 228-381-121 4-55z" />
            <path fill="#1c870d" d="M1277 452l381 122-169 228-381-121z" />
            <path fill="#2dbf19" d="M1108 681l381 121-4 55-381-121z" />
            <path fill="#197308" d="M1489 802l169-228-3 55-170 228z" />
            <path fill="#007300" d="M1328 441l233 75-113 152-233-74z" />
            <path fill="#04a60a" d="M1215 594l233 74-5 73-233-75z" />
            <path fill="#006300" d="M1448 668l113-152-5 73-113 152z" />
            <path fill="none" stroke="#11c41c" d="M1277 452l-4 55 382 122M1273 507l-65 88M1277 452l284 91M1328 441l-5 73 233 75M1323 514l-113 152M1658 574l-169 228" />
            <path fill="none" stroke="#239b16" d="M1620 563l-126 167-5 72M1208 595l-104 141" />
            <path fill="none" stroke="#147a28" d="M1151 621l343 109-5 72" />
            <path fill="none" stroke="#0eb416" stroke-width="2" d="M1328 441l233 75-5 73-113 152-233-75 5-72zM1215 594l233 74-5 73M1448 668l113-152" />
            <path fill="none" stroke="#24dc20" stroke-width="2" d="M1104 736l381 121 170-228 3-55M1314 464l-37-12-169 229-4 55M1559 543l99 31" />
          </g>
          <g fill="none" stroke="#0d6b48">
            <path d="M854 596l1-33M851 578l4-15 4 15zM849 599l-35-10 13 8 3-6zM856 595l18-24M852 600h8" />
            <g stroke="none" fill="#0d6b48" font-family="Liberation Sans" font-size="17">
              <text x="852" y="554">Z</text><text x="872" y="568">X</text><text x="793" y="581">Y</text><text x="853" y="620" fill="#0a4f62">333</text>
            </g>
            <text x="471" y="497" stroke="none" fill="#52830f" font-family="Liberation Sans" font-size="17">UCS39</text>
          </g>

          <!-- second part -->
          <path fill="#8b5d40" d="M1277 452l381 122-169 228-381-121z" />
          <path fill="#c3845f" d="M1108 681l381 121-4 55-381-121z" />
          <path fill="#755035" d="M1489 802l169-228-3 55-170 228z" />
          <path fill="#000" d="M1328 441l233 75-5 73-113 152-233-75 5-72z" />
          <path fill="#070707" d="M1215 594l233 74-5 73-233-75z" />
          <g fill="none" stroke="#2d2ad2">
            <path d="M1663 501l-5 73M1113 608l-5 73M1113 608l381 122M1663 501l-169 229-5 72" />
            <path d="M1273 507l382 122M1273 507l-169 229M1314 464l247 79M1328 441l-5 73 233 75M1323 514l-113 152M1215 594l233 74-5 73M1448 668l113-152" />
            <path stroke-width="2" stroke="#3a1fa8" d="M1314 464l-37-12-169 229 381 121 169-228-99-31M1108 681l-4 55 381 121 170-228 3-55M1489 802l-4 55" />
            <path stroke-width="2" stroke="#251e96" d="M1328 441l233 75-5 73-113 152-233-75 5-72z" />
          </g>
          <path fill="none" stroke="#e22ad8" d="M1663 501l-381-122-169 229M1282 379l-9 128" />

          <!-- coordinate system marker -->
          <g fill="none" stroke="#1717a3">
            <circle cx="707" cy="689" r="4" stroke-width="2" />
            <path d="M707 684l2-17M709 684l2-17M706 667l7-20 2 20zM703 687l-18-5M703 690l-19-5M685 688l-20-12 20 2zM704 692l-6 5M706 694l-6 5M694 695l-4 9 9-4z" />
            <g stroke="none" fill="#0c0c9c" font-family="Liberation Sans" font-size="17">
              <text x="711" y="635">X</text><text x="644" y="672">Y</text><text x="677" y="709">Z</text><text x="704" y="714">UCS10_1</text>
            </g>
          </g>

          <!-- view triad -->
          <path stroke="#0e9212" stroke-width="5" d="M420 955l11-15" /><path fill="#0e9212" d="M438 931l-2 15-10-9z" />
          <path stroke="#1d2fd6" stroke-width="5" d="M418 957l2-26" /><path fill="#1d2fd6" d="M421 920l5 14h-11z" />
          <path stroke="#e01414" stroke-width="5" d="M420 960l32 9" /><path fill="#e01414" d="M464 974l-15 1 3-11z" />
          <circle cx="417" cy="960" r="5" fill="#f6ee3c" />
          <g font-family="Noto Sans" font-size="16">
            <text x="416" y="916" fill="#3a3ac4">Z</text><text x="438" y="930" fill="#2f9a3a">Y</text><text x="470" y="983" fill="#d83030">X</text>
          </g>

          <path fill="#fff" stroke="#000" d="M904 424v21l4-4 5 9 4-2-4-9h5z" />
          <path fill="#000" d="M923 455l6-7 10-2 6 6v8l-10 5-12-1z" /><path stroke="#fff" stroke-width="1" d="M926 453l10-5M930 459l12-6M925 459v5" />
        </svg>
        <div class="floats">
          <div v-for="(bar, bi) in floats" :key="bi" class="float">
            <template v-for="f in bar" :key="f.icon">
              <button class="fbtn" :class="{ on: f.on }" :aria-label="f.label"><svg viewBox="0 0 20 20" v-html="art[f.icon]" /></button>
              <button v-if="f.caret" class="qcaret" :aria-label="f.label + '选项'"><i class="caret" /></button>
              <span v-if="f.sep" class="vsep" />
            </template>
            <i v-if="bi === 2" class="more" />
          </div>
        </div>
      </div>
    </main>

    <div class="monitor"><button>NC计算监视器</button></div>
    <footer class="status"><span v-for="(c, i) in statusCells" :key="i" :class="'cell c' + i">{{ c }}</span></footer>
    <div class="taskline" />
  </div>
</template>

<style>
body { margin: 0; background: #eee; }
</style>

<style scoped>
.app {
  display: flex; flex-direction: column; min-height: 100vh; box-sizing: border-box;
  background: #eeeeef; color: #111; overflow: hidden;
  font: 12px/16px "Open Sans", "Noto Sans CJK SC", sans-serif;
}
button { border: 0; padding: 0; margin: 0; background: none; font: inherit; color: inherit; display: flex; align-items: center; justify-content: center; }
input { font: inherit; border: 0; padding: 0; background: none; outline: 0; min-width: 0; }
svg { display: block; flex: none; }
h1, h2 { margin: 0; font-size: 12px; }
ul { list-style: none; margin: 0; padding: 0; }
.caret { width: 0; height: 0; border: 3px solid transparent; border-top: 4px solid #333d47; border-bottom: 0; }
.vsep { width: 1px; height: 18px; background: #93a5b4; }

.titlebar { display: flex; align-items: center; height: 27px; padding-top: 1px; box-sizing: border-box; background: #809eb3; }
.logo { width: 18px; height: 20px; margin-left: 7px; }
.quick { display: flex; align-items: center; height: 21px; margin-left: 8px; box-sizing: border-box; border: 1px solid #6f8da6; border-radius: 2px; background: #b4c5d4; }
.qbtn { width: 21px; height: 21px; }
.qbtn svg { width: 19px; height: 19px; }
.qcaret { width: 9px; height: 20px; }
.menu { display: flex; gap: 15px; margin-left: 17px; padding-top: 1px; color: #fff; white-space: nowrap; }
.title { flex: 1; padding-top: 1px; text-align: center; color: #fff; font-weight: 700; }
.command { display: flex; align-items: center; width: 65px; height: 20px; background: #fff; border-radius: 2px; }
.command input { width: 40px; margin-left: 4px; font-style: italic; }
.command input::placeholder { color: #111; opacity: 1; }
.command svg { width: 14px; height: 14px; margin-left: 2px; }
.winctl { display: flex; gap: 17px; margin: 0 8px 0 10px; }
.winctl svg, .docctl svg { width: 12px; height: 12px; }

.ribbon { display: flex; gap: 3px; height: 76px; padding: 1px 0 1px; box-sizing: border-box; border-bottom: 1px solid #fafafa; background: #eff0f1; }
.edge { display: flex; flex-direction: column; justify-content: flex-end; gap: 3px; width: 5px; padding-bottom: 2px; flex: none; }
.edge i { width: 4px; height: 7px; margin-left: 1px; border: 1px solid #8a9aa8; box-sizing: border-box; background: #e8e0b8; }
.edge i + i { background: #fff; }
.group { display: flex; flex: none; padding-right: 7px; border: 1px solid #ccd6dd; border-top-color: #dfe6ea; background: #e4e9ee; }
.group.tight { padding-right: 5px; }
.group.loose { padding-right: 8px; }
.grip { width: 11px; flex: none; height: 15px; margin-top: 3px; background: radial-gradient(circle at 1px 1px, #9db4c6 1px, transparent 2px) 4px 0 / 4px 4px; clip-path: inset(0 0 0 3px); }
.section { display: flex; align-items: flex-start; }
.section + .section { border-left: 1px solid #cbd6dd; }
.tool { flex-direction: column; justify-content: flex-start; width: 36px; padding-top: 5px; font-size: 11px; white-space: nowrap; color: #2c3036; }
.tool span { margin-top: 2px; line-height: 16px; }
.tool .caret { margin-top: 15px; }
.roomy .tool { width: 37px; }
.tool.len4 { width: 49px; }
.tool.len5 { width: 59px; }
.tool.len6 { width: 72px; }
.big { width: 28px; height: 28px; }
.bigcol { display: flex; flex-direction: column; gap: 8px; width: 36px; padding-top: 5px; align-items: center; }
.col { display: flex; flex-direction: column; gap: 6px; width: 21px; padding-top: 3px; align-items: center; }
.stack { width: 23px; }
.small { width: 18px; height: 18px; }
.small svg, .drop svg { width: 18px; height: 18px; }
.palette { display: flex; flex-direction: column; gap: 10px; width: 60px; padding-top: 5px; }
.swatches { display: grid; grid-template-columns: repeat(4, 13px); grid-auto-rows: 13px; gap: 2px; }
.swatches button { width: 13px; height: 13px; }
.current { display: flex; flex-direction: column; width: 22px; padding-top: 4px; }
.black { width: 18px; height: 18px; background: #000; }
.wheel { width: 18px; height: 15px; margin-top: 1px; background: conic-gradient(#8fe060, #c8f0c0 90deg, #5a90e0 150deg, #6a60b0 190deg, #c04080 230deg, #e85040 270deg, #f0e060 330deg, #8fe060); }
.drop { width: 18px; margin-top: 3px; }
.docctl { margin-left: auto; margin-right: 7px; width: 12px; display: flex; flex-direction: column; gap: 6px; padding-top: 2px; }

.body { display: flex; flex: 1; margin-top: 4px; padding: 0 5px 0 4px; border-bottom: 1px solid #fff; }
.dock { display: flex; flex-direction: column; width: 302px; flex: none; }
.dockhead { display: flex; align-items: center; gap: 5px; height: 22px; padding: 0 2px 0 3px; border-top: 1px solid #8d9aa5; box-sizing: border-box; background: #bccbd8; color: #34485c; }
.dockhead h2 { flex: 1; font-weight: 400; }
.dockhead svg, .box svg { width: 12px; height: 12px; }
.find { display: flex; align-items: flex-start; gap: 3px; height: 25px; padding-left: 3px; }
.box { display: flex; align-items: flex-start; width: 198px; height: 22px; background: #fff; }
.box input { flex: 1; height: 20px; margin-left: 4px; font-style: italic; }
.box input::placeholder { color: #666; opacity: 1; }
.box button { height: 22px; margin-right: 2px; }
.filter { width: 18px; height: 22px; }
.filter svg { width: 18px; height: 18px; }
.tree { flex: 1; margin-right: 1px; padding: 2px 2px 0 3px; border: 1px solid #85888c; background: #fff; }
.treehead { height: 19px; line-height: 18px; padding-left: 6px; box-sizing: border-box; border-right: 1px solid #85888c; border-bottom: 1px solid #85888c; background: #eee; }
li { display: flex; align-items: center; height: 21px; }
.guide { position: relative; width: 28px; height: 21px; flex: none; }
.guide::before { content: ""; position: absolute; left: 18px; top: 0; bottom: 0; border-left: 1px solid #b5b5b5; }
.first .guide::before { top: 10px; }
.last .guide::before { bottom: 10px; }
.guide.stub::after { content: ""; position: absolute; left: 18px; top: 10px; width: 9px; border-top: 1px solid #b5b5b5; }
.expander { position: absolute; z-index: 1; left: 12px; top: 4px; }
.expander svg { width: 12px; height: 12px; }
.badge { width: 9px; height: 18px; flex: none; }
.badge svg { width: 10px; height: 18px; }
.ticon { width: 18px; height: 18px; }
.name { margin-left: 5px; white-space: nowrap; }
.child .badge { width: 36px; position: relative; }
.child .badge::before { content: ""; position: absolute; left: 17px; top: 0; width: 9px; height: 9px; border-left: 1px solid #b5b5b5; border-bottom: 1px solid #b5b5b5; }
.tabs { display: flex; height: 24px; align-items: flex-start; }
.tabs button { width: 48px; height: 23px; box-sizing: border-box; border: 1px solid #85888c; border-top: 0; background: linear-gradient(#cfcfcf, #f0f0f0); }
.tabs .active { width: 50px; height: 24px; background: #fff; border-right: 0; }
.viewport { position: relative; flex: 1; min-width: 0; margin-left: 5px; border-left: 2px solid #77797b; border-top: 2px solid #77797b; background: #e2e2e2; }
.scene { position: absolute; inset: 0; width: 100%; height: 100%; }
.floats { position: absolute; left: 234px; top: 11px; display: flex; gap: 31px; }
.float { display: flex; align-items: center; height: 25px; padding: 0 2px; box-sizing: border-box; border: 1px solid #d3dae0; background: #e5ebf0; }
.fbtn { width: 21px; height: 23px; box-sizing: border-box; }
.fbtn svg { width: 18px; height: 20px; }
.fbtn.on { background: #fcc98b; border: 1px solid #e39a4c; height: 20px; }
.more { margin: 0 4px 0 0; border: 3px solid transparent; border-left: 4px solid #000; border-right: 0; }

.monitor { height: 25px; padding: 0 0 0 4px; box-sizing: border-box; }
.monitor button { height: 23px; padding: 0 9px 0 5px; border: 1px solid #85888c; border-bottom: 0; background: #fff; font-weight: 700; }
.status { display: flex; justify-content: flex-end; gap: 3px; height: 18px; padding-right: 1px; }
.cell { width: 101px; padding-left: 2px; box-sizing: border-box; border-top: 1px solid #9a9a9a; border-left: 1px solid #9a9a9a; line-height: 17px; white-space: nowrap; }
.c0 { width: 271px; }
.c4 { width: 201px; }
.c5 { width: 66px; }
.taskline { height: 2px; background: #47525c; border-bottom: 1px solid #9aa; box-sizing: border-box; }
</style>
